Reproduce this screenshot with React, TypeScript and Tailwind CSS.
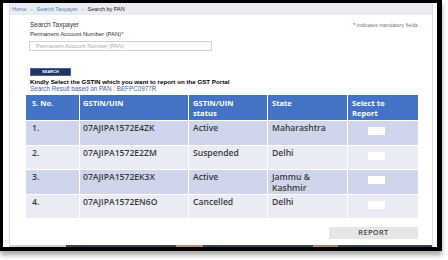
import React from "react";

const rows = [
  { no: "1.", gstin: "07AJIPA1572E4ZK", status: "Active", state: "Maharashtra", bg: "bg-[#cfd5ea]" },
  { no: "2.", gstin: "07AJIPA1572E2ZM", status: "Suspended", state: "Delhi", bg: "bg-[#e9ebf5]" },
  { no: "3.", gstin: "07AJIPA1572EK3X", status: "Active", state: "Jammu & Kashmir", bg: "bg-[#cfd5ea]" },
  { no: "4.", gstin: "07AJIPA1572EN6O", status: "Cancelled", state: "Delhi", bg: "bg-[#e9ebf5]" },
];

const cols = ["w-[53px] pl-[6px]", "w-[109px] pl-[3px] border-l border-white", "w-[79px] pl-[4px] border-l border-white", "w-[80px] pl-[4px] pr-[2px] border-l border-white", "w-[71px] pl-[4px] border-l border-white"];

const headers: React.ReactNode[] = [
  "S. No.",
  "GSTIN/UIN",
  <>GSTIN/UIN<br />status</>,
  "State",
  <>Select to<br />Report</>,
];

const App: React.FC = () => {
  return (
    <div className="w-[448px] h-[260px] bg-white overflow-hidden font-['Liberation_Sans',Arial,sans-serif]">
      <div className="w-[442px] h-[251px] border-black border-l-[3px] border-t-[3px] border-r-[5px] border-b-[4px] bg-white pl-[6px] pr-[4px] shadow-[0_4px_5px_rgba(0,0,0,0.35)]">
        <div className="h-full flex flex-col border-l border-r border-[#d9dde2]">
          {/* breadcrumb */}
          <div className="h-[12px] bg-[#e9ecf0] flex items-center px-[2px] text-[5.5px] gap-[4px] shrink-0">
            <span className="text-[#5b7fb8]">Home</span>
            <span className="text-[#9aa3ad]">›</span>
            <span className="text-[#5b7fb8]">Search Taxpayer</span>
            <span className="text-[#9aa3ad]">›</span>
            <span className="text-[#222]">Search by PAN</span>
          </div>

          <div className="flex-1 flex flex-col pl-[16px] pr-[14px]">
            <div className="pl-[4px] mt-[6px] flex justify-between items-center">
              <span className="text-[6.5px] leading-[8px] text-[#333]">Search Taxpayer</span>
              <span className="text-[5.3px] leading-[8px] text-[#777] pr-[0px]">
                <span className="text-[#e0202a]">*</span> indicates mandatory fields
              </span>
            </div>
            <div className="pl-[4px] mt-[2px] text-[5.9px] leading-[7px] text-[#333]">
              Permanent Account Number (PAN)<span className="text-[#e0202a]">*</span>
            </div>
            <div className="ml-[3px] mt-[3px] w-[183px] h-[10px] border border-[#cfd3d8] flex items-center pl-[6px] text-[5.7px] text-[#aaa]">
              Permanent Account Number (PAN)
            </div>

            <div className="ml-[4px] mt-[17px] w-[41px] h-[8px] bg-[#1e3461] border border-[#4d6290] flex items-center justify-center text-white text-[4px] font-bold">
              SEARCH
            </div>
            <div className="pl-[4px] mt-[2px] text-[6.2px] leading-[7px] font-bold text-black whitespace-nowrap">
              Kindly Select the GSTIN which you want to report on the GST Portal
            </div>
            <div className="pl-[4px] text-[6.3px] leading-[7px] text-[#3f63a8]">
              Search Result based on PAN : BEFPC0977R
            </div>

            {/* table */}
            <div className="mt-[3px] w-[392px] font-['Open_Sans',sans-serif]">
              <div className="flex bg-[#4472c4] text-white font-bold h-[25px] text-[7.6px] leading-[10px]">
                {headers.map((h, i) => (
                  <div key={i} className={`${cols[i]} pt-[3px]`}>
                    {h}
                  </div>
                ))}
              </div>
              {rows.map((r) => (
                <div key={r.no} className={`flex ${r.bg} h-[24.5px] border-t border-white text-[#3a3a3a] text-[8.6px] font-semibold leading-[11px]`}>
                  <div className={`${cols[0]} pt-[2px]`}>{r.no}</div>
                  <div className={`${cols[1]} pt-[2px]`}>{r.gstin}</div>
                  <div className={`${cols[2]} pt-[2px]`}>{r.status}</div>
                  <div className={`${cols[3]} pt-[2px]`}>{r.state}</div>
                  <div className="w-[71px] border-l border-white pl-[20px] pt-[6px]">
                    <div className="w-[17px] h-[8px] bg-white" />
                  </div>
                </div>
              ))}
            </div>

            <div className="mt-[9px] self-end w-[89px] h-[12px] bg-[#e6e6e6] flex items-center justify-center text-[7.5px] text-[#444] font-['Open_Sans',sans-serif] font-semibold tracking-[0.3px]">
              REPORT
            </div>
          </div>

          {/* bottom taskbar edge */}
          <div className="h-[2px] flex shrink-0">
            <div className="w-[56px] bg-[#c9ced4]" />
            <div className="w-[110px] bg-[#33475b]" />
            <div className="w-[27px] bg-[#c08a70]" />
            <div className="w-[110px] bg-[#33475b]" />
            <div className="w-[25px] bg-[#b0806a]" />
            <div className="flex-1 bg-[#33475b]" />
          </div>
        </div>
      </div>
    </div>
  );
};

export default App;
